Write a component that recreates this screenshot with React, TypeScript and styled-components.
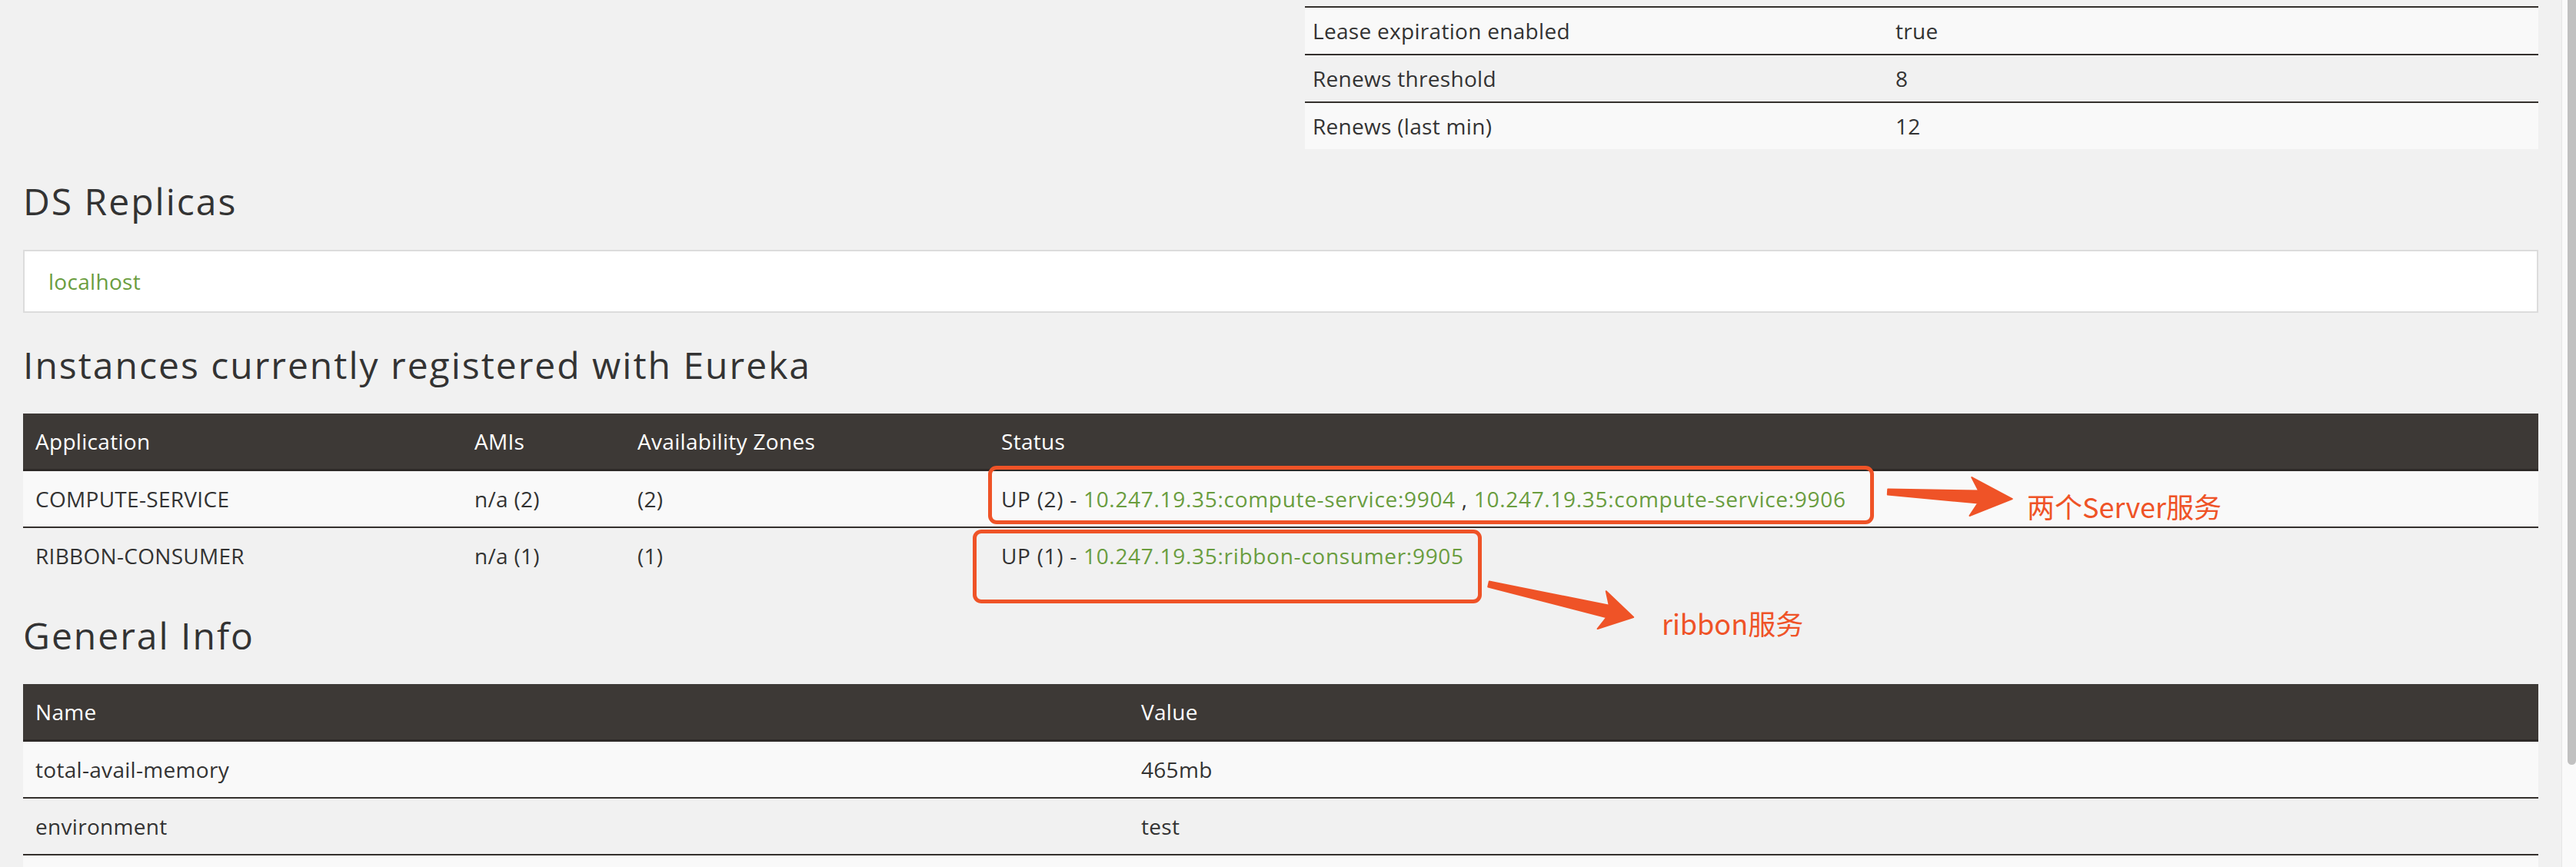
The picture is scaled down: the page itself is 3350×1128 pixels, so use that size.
import React from 'react'
import styled, { createGlobalStyle } from 'styled-components'

const GlobalStyle = createGlobalStyle`
  html, body {
    margin: 0;
    padding: 0;
    overflow: hidden;
    background: #f1f1f1;
  }
  #root {
    height: 1128px;
  }
`

const Page = styled.div`
  display: flex;
  height: 1128px;
  font-family: "Open Sans", "Noto Sans", sans-serif;
  color: #333;
`

const Main = styled.div`
  position: relative;
  flex: 1;
  padding: 8px 30px 0 30px;
  overflow: hidden;
`

const ScrollTrack = styled.div`
  width: 19px;
  border-left: 1px solid #e6e6e6;
  background: #fafafa;
  display: flex;
  padding-left: 7px;
  box-sizing: border-box;
`

const ScrollThumb = styled.div`
  width: 12px;
  height: 995px;
  background: #c1c1c1;
  border-radius: 0 0 6px 6px;
`

const TopRow = styled.div`
  display: grid;
  grid-template-columns: 1fr 1604px;
  column-gap: 30px;
`

const Heading = styled.h2`
  font-size: 48px;
  line-height: 56px;
  font-weight: 500;
  letter-spacing: 2px;
  margin: 40px 0 35px;
  color: #333;
`

const ReplicaBox = styled.div`
  background: #fff;
  border: 2px solid #dcdcdc;
  height: 82px;
  box-sizing: border-box;
  padding: 0 31px;
  display: flex;
  align-items: center;
  font-size: 28px;
  letter-spacing: 0.3px;
`

const Link = styled.a`
  color: #6a9d3f;
  text-decoration: none;
`

const Table = styled.table`
  width: 100%;
  border-collapse: separate;
  border-spacing: 0;
  table-layout: fixed;
  font-size: 28px;
  letter-spacing: 0.3px;
  color: #333;
`

const Th = styled.th<{ $w?: number }>`
  ${p => (p.$w ? `width: ${p.$w}px;` : '')}
  height: 75px;
  box-sizing: border-box;
  padding: 0 16px;
  background: #3d3936;
  color: #fff;
  font-weight: normal;
  text-align: left;
  border-bottom: 3px solid #2d2927;
  white-space: nowrap;
`

const Tr = styled.tr`
  &:nth-child(odd) td {
    background: #f9f9f9;
  }
  &:nth-child(even) td {
    background: #f1f1f1;
  }
  & + & td {
    border-top: 2px solid #34302d;
  }
`

const Td = styled.td`
  height: 72px;
  padding: 0 16px;
  white-space: nowrap;
`

const StatusTd = styled(Td)`
  letter-spacing: 0.7px;
`

const CompactTr = styled(Tr)`
  td {
    border-top: 2px solid #34302d;
  }
`

const CompactTd = styled.td<{ $w?: number }>`
  ${p => (p.$w ? `width: ${p.$w}px;` : '')}
  height: 60px;
  padding: 0 10px;
  white-space: nowrap;
`

const Overlay = styled.svg`
  position: absolute;
  left: 0;
  top: 0;
  width: 3330px;
  height: 1128px;
  pointer-events: none;
`

const Callout = styled.div<{ $x: number; $y: number; $w: number; $h: number }>`
  position: absolute;
  left: ${p => p.$x}px;
  top: ${p => p.$y}px;
  width: ${p => p.$w}px;
  height: ${p => p.$h}px;
  box-sizing: border-box;
  border: 5px solid #ef5327;
  border-radius: 11px;
`

const Note = styled.span<{ $x: number; $y: number }>`
  position: absolute;
  left: ${p => p.$x}px;
  top: ${p => p.$y}px;
  font-family: "Noto Sans CJK SC", "Noto Sans", sans-serif;
  font-size: 36px;
  line-height: 1;
  color: #ef5327;
  white-space: nowrap;
`

const statusRows = [
  ['Lease expiration enabled', 'true'],
  ['Renews threshold', '8'],
  ['Renews (last min)', '12'],
]

const generalRows = [
  ['total-avail-memory', '465mb'],
  ['environment', 'test'],
  ['', ''],
]

const Arrow = ({ x, y, len, angle, neck, head, barb }: { x: number; y: number; len: number; angle: number; neck: number; head: number; barb: number }) => {
  const pts = [
    [0, -3.5],
    [len - neck, -8],
    [len - head, -barb],
    [len, 0],
    [len - head, barb],
    [len - neck, 8],
    [0, 3.5],
  ]
  return (
    <polygon
      transform={`translate(${x} ${y}) rotate(${angle})`}
      points={pts.map(p => p.join(',')).join(' ')}
      fill="#ef5327"
      stroke="#ef5327"
      strokeWidth={2}
      strokeLinejoin="round"
    />
  )
}

export default function App() {
  return (
    <Page>
      <GlobalStyle />
      <Main>
        <TopRow>
          <div />
          <Table>
            <tbody>
              {statusRows.map(([k, v]) => (
                <CompactTr key={k}>
                  <CompactTd $w={738}>{k}</CompactTd>
                  <CompactTd>{v}</CompactTd>
                </CompactTr>
              ))}
            </tbody>
          </Table>
        </TopRow>

        <Heading>DS Replicas</Heading>
        <ReplicaBox>
          <Link href="#">localhost</Link>
        </ReplicaBox>

        <Heading>Instances currently registered with Eureka</Heading>
        <Table>
          <thead>
            <tr>
              <Th $w={571}>Application</Th>
              <Th $w={212}>AMIs</Th>
              <Th $w={473}>Availability Zones</Th>
              <Th>Status</Th>
            </tr>
          </thead>
          <tbody>
            <Tr>
              <Td>COMPUTE-SERVICE</Td>
              <Td>n/a (2)</Td>
              <Td>(2)</Td>
              <StatusTd>
                UP (2) - <Link href="#">10.247.19.35:compute-service:9904</Link> ,{' '}
                <Link href="#">10.247.19.35:compute-service:9906</Link>
              </StatusTd>
            </Tr>
            <Tr>
              <Td>RIBBON-CONSUMER</Td>
              <Td>n/a (1)</Td>
              <Td>(1)</Td>
              <StatusTd>
                UP (1) - <Link href="#">10.247.19.35:ribbon-consumer:9905</Link>
              </StatusTd>
            </Tr>
          </tbody>
        </Table>

        <Heading>General Info</Heading>
        <Table>
          <thead>
            <tr>
              <Th $w={1438}>Name</Th>
              <Th>Value</Th>
            </tr>
          </thead>
          <tbody>
            {generalRows.map(([k, v], i) => (
              <Tr key={i}>
                <Td>{k}</Td>
                <Td>{v}</Td>
              </Tr>
            ))}
          </tbody>
        </Table>

        {/* annotations drawn over the screenshot */}
        <Callout $x={1285} $y={606} $w={1152} $h={76} />
        <Callout $x={1265} $y={689} $w={662} $h={96} />
        <Overlay viewBox="0 0 3330 1128">
          <Arrow x={2455} y={640} len={162} angle={3.2} neck={44} head={54} barb={25} />
          <Arrow x={1936} y={760} len={193} angle={12.9} neck={34} head={42} barb={25} />
        </Overlay>
        <Note $x={2636} $y={640}>两个Server服务</Note>
        <Note $x={2161} $y={792}>ribbon服务</Note>
      </Main>
      <ScrollTrack>
        <ScrollThumb />
      </ScrollTrack>
    </Page>
  )
}
